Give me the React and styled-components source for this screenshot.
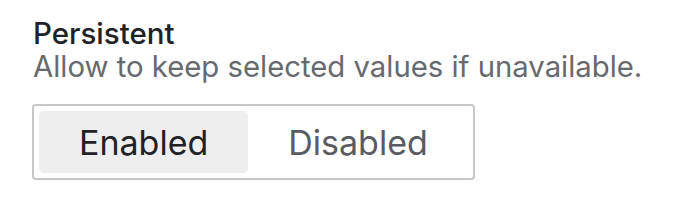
import React, { useState } from 'react';
import styled, { createGlobalStyle } from 'styled-components';

const Global = createGlobalStyle`
  body {
    margin: 0;
    background: #ffffff;
    font-family: Inter, "Noto Sans", sans-serif;
  }
`;

const Field = styled.div`
  display: flex;
  flex-direction: column;
  align-items: flex-start;
  padding: 16px 32px;
`;

const Label = styled.div`
  font-size: 29.5px;
  font-weight: 500;
  line-height: 34px;
  color: #1f2226;
  padding-left: 1px;
`;

const Hint = styled.div`
  font-size: 29.3px;
  line-height: 34px;
  color: #66696e;
  margin-bottom: 20px;
  padding-left: 1px;
`;

const Segmented = styled.div`
  display: flex;
  padding: 5px;
  border: 2px solid #c7c7c7;
  border-radius: 4px;
`;

const Option = styled.button`
  border: none;
  border-radius: 5px;
  padding: 0 40px;
  height: 62px;
  font-family: inherit;
  font-size: 34px;
  cursor: pointer;
  background: ${(p) => (p.$active ? '#eeeeee' : 'transparent')};
  color: ${(p) => (p.$active ? '#1f2226' : '#585c62')};
`;

export default function App() {
  const [value, setValue] = useState('enabled');
  return (
    <>
      <Global />
      <Field>
        <Label>Persistent</Label>
        <Hint>Allow to keep selected values if unavailable.</Hint>
        <Segmented>
          <Option $active={value === 'enabled'} onClick={() => setValue('enabled')}>
            Enabled
          </Option>
          <Option $active={value === 'disabled'} onClick={() => setValue('disabled')}>
            Disabled
          </Option>
        </Segmented>
      </Field>
    </>
  );
}
